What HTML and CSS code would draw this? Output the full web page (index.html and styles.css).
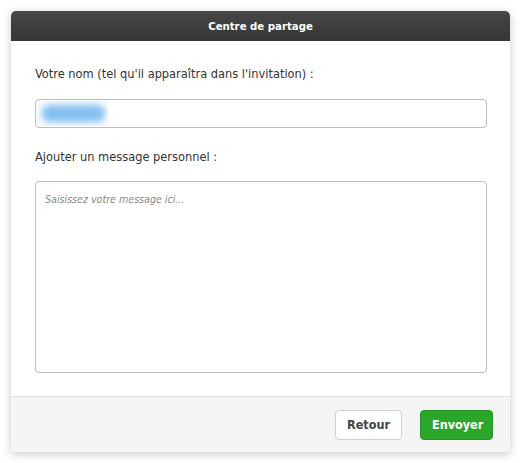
FILE: index.html
```html
<!DOCTYPE html>
<html lang="fr">
<head>
<meta charset="utf-8">
<title>Centre de partage</title>
<link rel="stylesheet" href="styles.css">
</head>
<body>
<div class="dialog">
  <div class="header">Centre de partage</div>
  <div class="body">
    <label class="label" for="nom">Votre nom (tel qu'il apparaîtra dans l'invitation) :</label>
    <div class="input">
      <span class="blurred"></span>
    </div>
    <label class="label label-msg" for="msg">Ajouter un message personnel :</label>
    <textarea class="textarea" id="msg" placeholder="Saisissez votre message ici..."></textarea>
  </div>
  <div class="footer">
    <button class="btn btn-back">Retour</button>
    <button class="btn btn-send">Envoyer</button>
  </div>
</div>
</body>
</html>
```
FILE: styles.css
```css
* { box-sizing: border-box; }
html, body { margin: 0; padding: 0; background: #ffffff; }
body {
  padding: 11px 12px 11px 11px;
  font-family: "DejaVu Sans Condensed", "DejaVu Sans", Verdana, sans-serif;
  font-size: 12.7px;
  color: #333;
}
.dialog {
  width: 499px;
  height: 441px;
  display: flex;
  flex-direction: column;
  border-radius: 5px 5px 0 0;
  box-shadow: 0 2px 10px rgba(0,0,0,0.22);
  background: #fff;
}
.header {
  height: 30px;
  flex: none;
  background: linear-gradient(#474747, #353535);
  border-radius: 5px 5px 0 0;
  color: #fff;
  font-weight: bold;
  font-size: 11.3px;
  display: flex;
  align-items: center;
  justify-content: center;
}
.body {
  flex: 1;
  padding: 25px 23px 23px 24px;
  display: flex;
  flex-direction: column;
}
.label { display: block; line-height: 16px; color: #333; }
.input {
  margin-top: 17px;
  height: 29px;
  border: 1px solid #bdbdbd;
  border-radius: 4px;
  padding: 1px;
  display: flex;
}
.blurred {
  width: 71px;
  background: #f6fafe;
  position: relative;
  overflow: hidden;
}
.blurred::after {
  content: "";
  position: absolute;
  left: 5px; right: 3px; top: 4px; bottom: 4px;
  background: #86c0f0;
  border-radius: 8px;
  filter: blur(3px);
}
.label-msg { margin-top: 21px; }
.textarea {
  margin-top: 16px;
  height: 192px;
  border: 1px solid #bdbdbd;
  border-radius: 4px;
  padding: 11px 9px;
  resize: none;
  font-family: inherit;
  font-size: 10.6px;
  color: #333;
  background: #fff;
}
.textarea::placeholder { color: #888; font-style: italic; }
.footer {
  height: 56px;
  flex: none;
  background: #f5f5f5;
  border-top: 1px solid #e2e2e2;
  display: flex;
  justify-content: flex-end;
  align-items: center;
  gap: 18px;
  padding: 0 17px 0 0;
}
.btn {
  height: 30px;
  border-radius: 4px;
  font-family: inherit;
  font-size: 12.5px;
  font-weight: bold;
  padding: 0 11px;
  cursor: pointer;
}
.btn-back {
  background: #fff;
  border: 1px solid #cfcfcf;
  color: #444;
  width: 67px;
}
.btn-send {
  background: #2aa62a;
  border: 1px solid #239423;
  color: #fff;
  width: 73px;
}
```
